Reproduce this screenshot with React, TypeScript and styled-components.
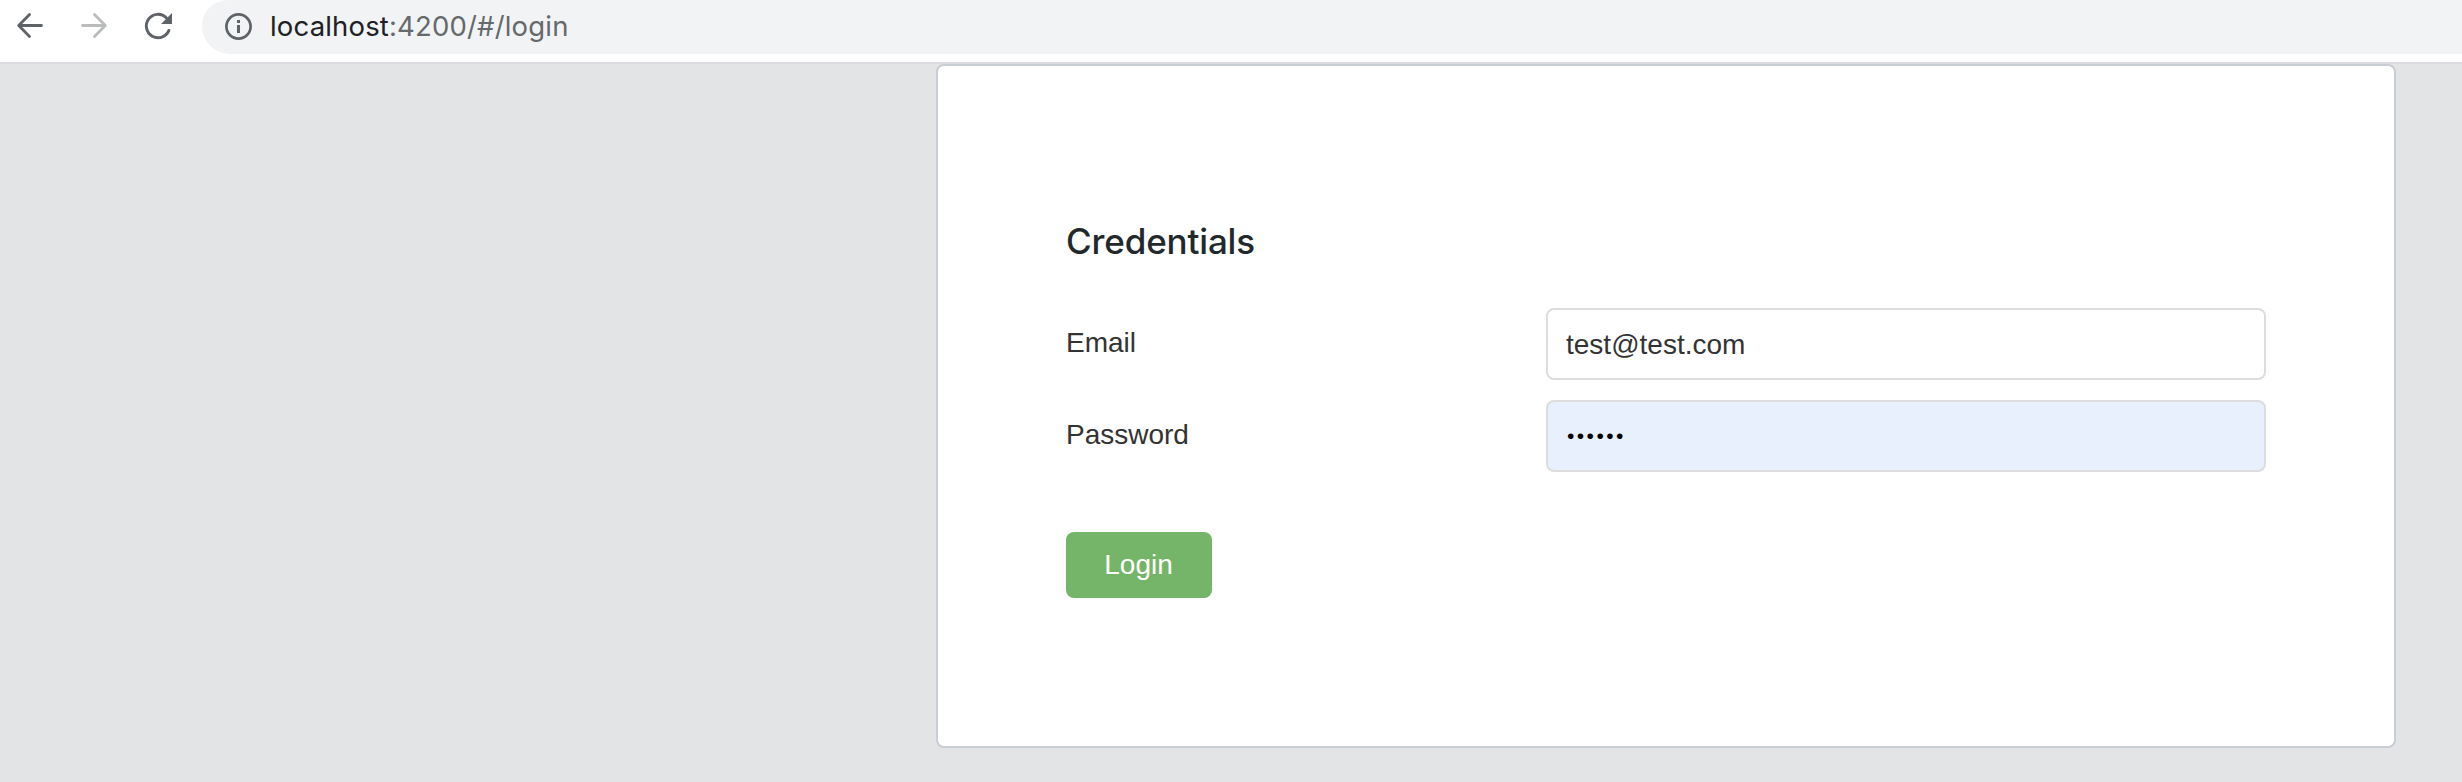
import React, { useState } from "react";
import styled, { createGlobalStyle } from "styled-components";

const GlobalStyle = createGlobalStyle`
  *, *::before, *::after { box-sizing: border-box; }
  body {
    margin: 0;
    background: #e3e4e6;
    overflow: hidden;
    font-family: "Liberation Sans", Arial, sans-serif;
    font-size: 28px;
    color: #333;
  }
`;

const Screen = styled.div`
  display: flex;
  flex-direction: column;
  height: 782px;
`;

const Toolbar = styled.header`
  display: flex;
  align-items: flex-start;
  height: 64px;
  background: #fff;
  border-bottom: 2px solid #dadce0;
`;

const NavButtons = styled.nav`
  display: flex;
  width: 202px;
  padding-left: 8px;
  gap: 20px;
`;

const NavButton = styled.button<{ $dimmed?: boolean }>`
  width: 44px;
  height: 52px;
  padding: 0;
  border: 0;
  background: none;
  color: ${(p) => (p.$dimmed ? "#babcbe" : "#5f6368")};
  svg { display: block; }
`;

const AddressBar = styled.div`
  display: flex;
  flex: 1;
  height: 54px;
  padding-left: 20px;
  gap: 15px;
  background: #f1f3f4;
  border-radius: 26px 0 0 28px / 26px 0 0 28px;
`;

const Url = styled.div`
  padding-top: 1px;
  font-family: Inter, sans-serif;
  font-size: 27.5px;
  line-height: 50px;
  letter-spacing: 0.17px;
  white-space: nowrap;
  color: #66696c;
`;

const Host = styled.span`
  color: #202124;
`;

const Page = styled.main`
  display: flex;
  justify-content: flex-end;
  flex: 1;
  padding-right: 66px;
`;

const Card = styled.form`
  width: 1460px;
  height: 684px;
  padding: 155px 128px 0;
  background: #fff;
  border: 2px solid #c8ced3;
  border-radius: 8px;
`;

const Title = styled.h4`
  margin: 0 0 47px;
  font-family: Inter, sans-serif;
  font-size: 35px;
  font-weight: 500;
  line-height: 40px;
  letter-spacing: -0.15px;
  color: #23282c;
`;

const Field = styled.div`
  display: grid;
  grid-template-columns: 480px 720px;
  margin-bottom: 20px;
`;

const Label = styled.label`
  line-height: 32px;
  padding-top: 19px;
`;

const Input = styled.input`
  width: 720px;
  height: 72px;
  padding: 2px 18px 0;
  border: 2px solid #ddd;
  border-radius: 8px;
  outline: none;
  font-family: inherit;
  font-size: 28px;
  color: #333;
  background: #fff;
`;

const PasswordInput = styled(Input)`
  padding: 0 19px;
  font-size: 21px;
  letter-spacing: 2.45px;
  color: #000;
  background: #e8f0fe;
`;

const LoginButton = styled.button`
  width: 146px;
  height: 66px;
  margin-top: 40px;
  padding: 0 1px 0 0;
  border: 0;
  border-radius: 8px;
  background: #75b569;
  color: #fff;
  font-family: inherit;
  font-size: 28px;
`;

const BackIcon = () => (
  <svg width="44" height="52" viewBox="0 0 44 52" fill="none" stroke="currentColor" strokeWidth="2.8" strokeLinecap="round" strokeLinejoin="round">
    <path d="M33.5 25.5H11M21.5 14.5L10.7 25.5L21.5 36.5" />
  </svg>
);

const ForwardIcon = () => (
  <svg width="44" height="52" viewBox="0 0 44 52" fill="none" stroke="currentColor" strokeWidth="2.8" strokeLinecap="round" strokeLinejoin="round">
    <path d="M10.5 25.5H33M22.5 14.5L33.3 25.5L22.5 36.5" />
  </svg>
);

const ReloadIcon = () => (
  <svg width="44" height="52" viewBox="0 0 44 52" fill="none">
    <path d="M32.9 30.4A11.7 11.7 0 1 1 30.3 17.7" stroke="currentColor" strokeWidth="2.9" strokeLinecap="round" />
    <path d="M36 13V24H25Z" fill="currentColor" />
  </svg>
);

const InfoIcon = () => (
  <svg width="33" height="52" viewBox="0 0 33 52" fill="none">
    <circle cx="16.5" cy="26.5" r="12.1" stroke="#5f6368" strokeWidth="2.7" />
    <path d="M15 19.9h3v3h-3zM15 25h3v8h-3z" fill="#5f6368" />
  </svg>
);

export default function App() {
  const [email, setEmail] = useState("test@test.com");
  const [password, setPassword] = useState("secret");

  return (
    <Screen>
      <GlobalStyle />
      <Toolbar>
        <NavButtons>
          <NavButton aria-label="Back"><BackIcon /></NavButton>
          <NavButton aria-label="Forward" $dimmed><ForwardIcon /></NavButton>
          <NavButton aria-label="Reload"><ReloadIcon /></NavButton>
        </NavButtons>
        <AddressBar>
          <InfoIcon />
          <Url><Host>localhost</Host>:4200/#/login</Url>
        </AddressBar>
      </Toolbar>
      <Page>
        <Card onSubmit={(e) => e.preventDefault()}>
          <Title>Credentials</Title>
          <Field>
            <Label htmlFor="email">Email</Label>
            <Input id="email" value={email} onChange={(e) => setEmail(e.target.value)} />
          </Field>
          <Field>
            <Label htmlFor="password">Password</Label>
            <PasswordInput id="password" type="password" value={password} onChange={(e) => setPassword(e.target.value)} />
          </Field>
          <LoginButton type="submit">Login</LoginButton>
        </Card>
      </Page>
    </Screen>
  );
}
